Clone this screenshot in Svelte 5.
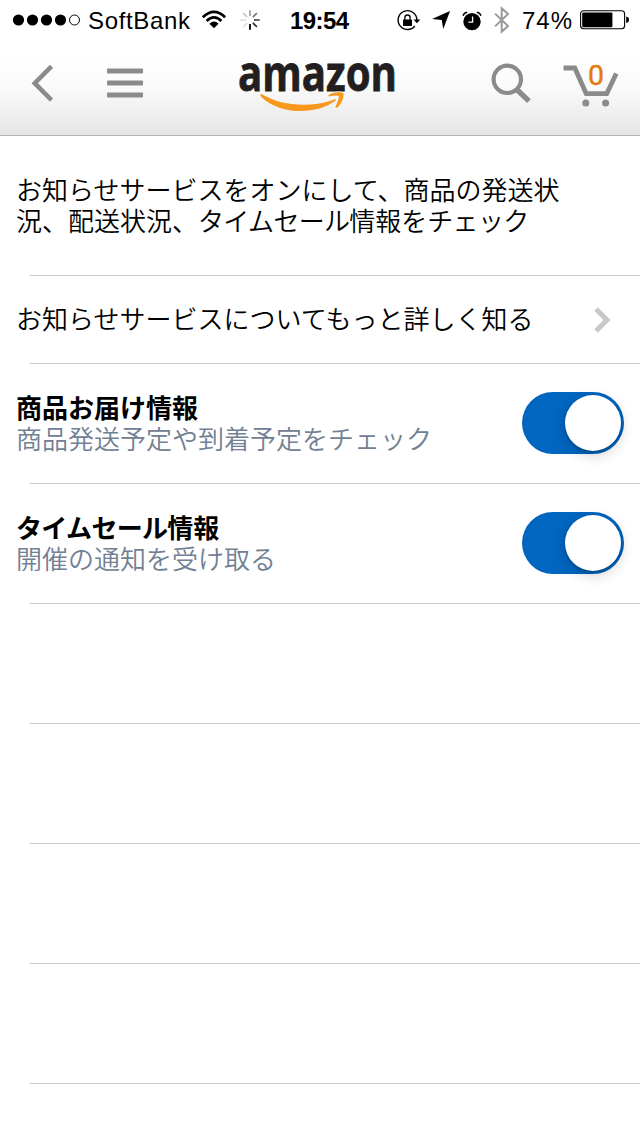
<script>
  const rows = $state([
    { lead: '', title: '商品お届け情報', detail: '商品発送予定や到着予定をチェック', on: true },
    { lead: 'タイムセール', title: '情報', detail: '開催の通知を受け取る', on: true }
  ]);
  const blanks = [0, 1, 2, 3];
  const spokes = [0.5, 0.65, 0.8, 1, 0.12, 0.12, 0.2, 0.35].map((opacity, i) => ({ opacity, angle: i * 45 + 45 }));
</script>

<div class="screen">
  <header>
    <div class="status">
      <svg class="signal" width="68" height="14" viewBox="0 0 68 14">
        {#each [5.5, 19.5, 33.5, 47.5] as x}<circle cx={x} cy="7" r="5.6" />{/each}
        <circle cx="61.5" cy="7" r="5" fill="none" stroke="#000" stroke-width="1" />
      </svg>
      <svg class="carrier" width="104" height="30"><text x="0" y="24" textLength="102" lengthAdjust="spacing">SoftBank</text></svg>
      <svg class="wifi" width="26" height="20" viewBox="0 0 26 20">
        <path d="M1.8 7.2Q13-3.6 24.2 7.2M5.6 11Q13 3.8 20.4 11" fill="none" stroke="#000" stroke-width="2.7" />
        <path d="M8.4 13.7Q13 9.4 17.6 13.7L13 18.3Z" />
      </svg>
      <svg class="spinner" width="20" height="20" viewBox="0 0 20 20">
        {#each spokes as spoke}
          <path d="M10 0.3V6" stroke="#000" stroke-width="1.8" opacity={spoke.opacity} transform={`rotate(${spoke.angle} 10 10)`} />
        {/each}
      </svg>
      <svg class="clock" width="60" height="30"><text x="0" y="24" textLength="59" lengthAdjust="spacing">19:54</text></svg>
      <svg class="lock" width="24" height="22" viewBox="0 0 24 22">
        <path d="M17.8 16A9.4 9.4 0 1 1 19.9 10" fill="none" stroke="#000" stroke-width="1.4" />
        <path d="M16.5 9.5H23.3L19.9 13.3Z" />
        <rect x="6" y="9.5" width="9" height="6.4" rx=".5" />
        <path d="M7.9 10V7.6A2.6 2.6 0 0 1 13.1 7.6V10" fill="none" stroke="#000" stroke-width="1.3" />
      </svg>
      <svg class="arrow" width="18" height="18" viewBox="0 0 18 18"><path d="M18 0L11.3 18L9.7 9L0 8Z" /></svg>
      <svg class="alarm" width="20" height="20" viewBox="0 0 20 20">
        <circle cx="10" cy="10.6" r="8.7" />
        <path d="M1 4.8Q2 1.8 5.2 1.2M19 4.8Q18 1.8 14.8 1.2" fill="none" stroke="#000" stroke-width="1.4" />
        <path d="M10.6 5.5V11.2H6.4" fill="none" stroke="#fff" stroke-width="1.3" />
      </svg>
      <svg class="bluetooth" width="16" height="28" viewBox="0 0 16 28">
        <path d="M1 7.6L14 20L7.7 25.8V2.2L14 8L1 20.4" fill="none" stroke="#999" stroke-width="2" />
      </svg>
      <svg class="percent" width="52" height="30"><text x="0" y="24" textLength="50" lengthAdjust="spacing">74%</text></svg>
      <svg class="battery" width="50" height="20" viewBox="0 0 50 20">
        <rect x=".6" y=".8" width="44" height="18" rx="3" fill="none" stroke="#000" stroke-width="1.1" />
        <rect x="2.2" y="2.4" width="30.2" height="14.8" rx="1" />
        <path d="M46.2 6.5Q49 7 49 9.8T46.2 13Z" />
      </svg>
    </div>

    <nav>
      <button class="back" aria-label="戻る">
        <svg width="24" height="40" viewBox="0 0 24 40"><path d="M21.5 3.3L4.7 20.2L21.5 37.1" fill="none" stroke="#8b8b8b" stroke-width="4.5" /></svg>
      </button>
      <button class="menu" aria-label="メニュー">
        <svg width="36" height="30" viewBox="0 0 36 30">
          {#each [0, 12, 24] as y}<rect x="0" y={y + 0.4} width="36" height="5.2" rx="1" fill="#8b8b8b" />{/each}
        </svg>
      </button>
      <svg class="logo" width="160" height="54" viewBox="0 0 160 54">
        <text x="1" y="32.3" textLength="159" lengthAdjust="spacingAndGlyphs">amazon</text>
        <path d="M25 35.3C45 47.5 75 49 98 40.2Q100 40.4 98.4 41.8C79 56 44 56 24.4 38.2C22.8 36.4 23 34.3 25 35.3Z" fill="#f8991d" />
        <path d="M91.6 36.2C95 33 102.5 32.5 106.2 34C107.5 37.5 104.8 44.9 100.4 48.4C98.6 49.3 98.1 48.7 98.8 47.1C101.6 40.2 102.4 37.2 101.6 36.9C99.9 36.2 96 36.4 92.7 37.2C91.1 37.6 90.5 37 91.6 36.2Z" fill="#f8991d" stroke="#f2f2f2" stroke-width="1.2" paint-order="stroke" />
      </svg>
      <button class="search" aria-label="検索">
        <svg width="42" height="42" viewBox="0 0 42 42"><circle cx="16.3" cy="16.3" r="13.7" fill="none" stroke="#8b8b8b" stroke-width="4.2" /><path d="M25.5 26.3L38 38.1" stroke="#8b8b8b" stroke-width="5.4" /></svg>
      </button>
      <button class="cart" aria-label="カート">
        <svg width="58" height="44" viewBox="0 0 58 44">
          <path d="M.5 5H11.8L23.2 30.7H43.7L53.3 10.5" fill="none" stroke="#8b8b8b" stroke-width="4.8" />
          <circle cx="22.8" cy="40" r="3.5" fill="#8b8b8b" /><circle cx="42.6" cy="40" r="3.5" fill="#8b8b8b" />
          <text x="25" y="22.3" textLength="16" lengthAdjust="spacingAndGlyphs">0</text>
        </svg>
      </button>
    </nav>
  </header>

  <main>
    <section class="row intro"><p>お知らせサービスをオンにして、商品の発送状<br />況、配送状況、<span class="tight">タイムセール</span>情報を<span class="tighter">チェック</span></p></section>
    <section class="row link">
      <p>お知らせサービスについてもっと詳しく知る</p>
      <svg width="17" height="26" viewBox="0 0 17 26"><path d="M2 2L13 13L2 24" fill="none" stroke="#c7c7cc" stroke-width="5" /></svg>
    </section>
    {#each rows as row}
      <section class="row">
        <div class="label"><h2><span class="tight">{row.lead}</span>{row.title}</h2><p>{row.detail}</p></div>
        <button class="switch" class:on={row.on} role="switch" aria-checked={row.on} aria-label={row.lead + row.title} onclick={() => (row.on = !row.on)}><span class="knob"></span></button>
      </section>
    {/each}
    {#each blanks as blank}<div class="row"></div>{/each}
  </main>
</div>

<style>
  :global(body) { margin: 0; background: #fff; }
  .screen { width: 640px; height: 1136px; overflow: hidden; background: #fff; color: #000; font-family: "Noto Sans CJK JP", sans-serif; }
  svg { display: block; flex: none; overflow: visible; }
  button { border: 0; padding: 0; background: none; flex: none; }
  header { box-sizing: border-box; height: 136px; border-bottom: 1px solid #b5b5b5; background: linear-gradient(#fff 0, #fff 58px, #fafafa 88px, #e5e5e5 135px); }
  .status { display: flex; align-items: center; height: 40px; padding-left: 13px; }
  .status text { font: 24px "Liberation Sans", Arial, sans-serif; }
  .status .clock text { font-weight: 700; }
  .carrier { margin-left: 7px; }
  .wifi { margin-left: 9px; }
  .spinner { margin-left: 13px; }
  .clock { margin-left: 30px; }
  .lock { margin-left: 47px; }
  .arrow { margin-left: 11px; }
  .alarm { margin-left: 12px; }
  .bluetooth { margin-left: 12px; }
  .percent { margin-left: 12px; }
  .battery { margin-left: 6px; }
  .lock, .alarm { transform: translateY(1px); }
  nav { display: flex; align-items: flex-start; padding-left: 30px; }
  .back { margin-top: 23px; }
  .menu { margin: 28px 0 0 53px; }
  .logo { margin: 19px 0 0 94px; }
  .logo text { font: 700 49px "Open Sans", sans-serif; fill: #231f20; stroke: #231f20; stroke-width: .8px; }
  .search { margin: 23px 0 0 94px; }
  .cart { margin: 23px 0 0 30px; }
  .cart text { font: 400 28px "Roboto", sans-serif; fill: #e47911; stroke: #e47911; stroke-width: .4px; }
  .row { box-sizing: border-box; height: 120px; display: flex; align-items: center; justify-content: space-between; padding: 0 16px 2px; background: linear-gradient(#c8c7cc, #c8c7cc) 30px 100% / 100% 1px no-repeat; }
  .intro { height: 140px; padding-right: 64px; padding-bottom: 5px; }
  .link { height: 88px; padding-right: 29px; padding-bottom: 0; }
  .link p { margin-top: -5px; }
  .label { margin-top: -3px; }
  p, h2 { margin: 0; font-size: 26px; line-height: 31px; white-space: nowrap; }
  p { font-weight: 350; }
  h2 { font-weight: 700; }
  .tight { letter-spacing: -.7px; }
  .tighter { letter-spacing: -.7px; }
  .label p { color: #718093; }
  .switch { display: flex; align-items: center; width: 102px; height: 62px; border-radius: 31px; background: #d5d5d5; padding: 0 3px; }
  .switch.on { background: #0066c0; justify-content: flex-end; }
  .knob { width: 56px; height: 56px; border-radius: 50%; background: #fff; box-shadow: 0 4px 14px rgba(0, 0, 0, .2), 0 1px 3px rgba(0, 0, 0, .25); }
</style>
